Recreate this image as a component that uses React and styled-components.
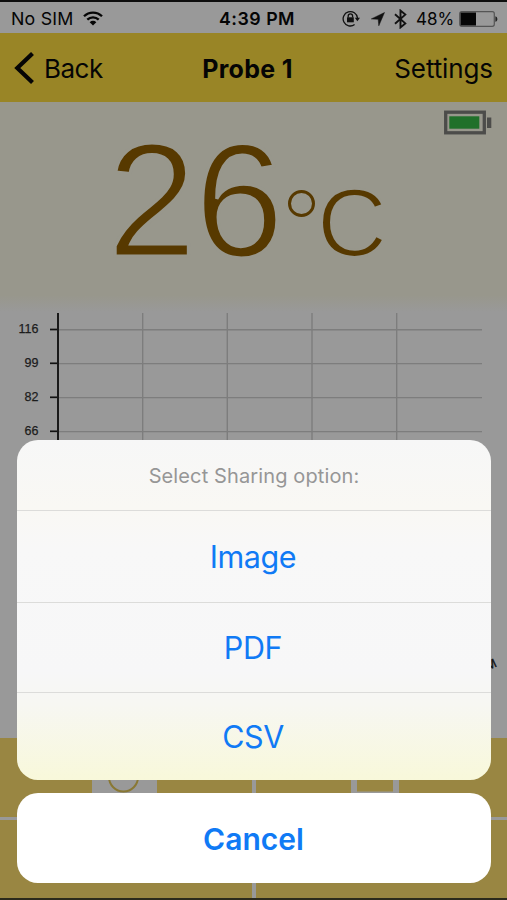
import React from "react";
import styled, { createGlobalStyle } from "styled-components";

const GlobalStyle = createGlobalStyle`
  * {
    box-sizing: border-box;
  }
  body {
    margin: 0;
    font-family: Inter, "Liberation Sans", sans-serif;
  }
  button {
    font-family: inherit;
    border: 0;
    margin: 0;
    padding: 0;
    background: none;
    cursor: pointer;
  }
`;

const Phone = styled.div`
  position: relative;
  display: flex;
  flex-direction: column;
  width: 507px;
  height: 900px;
  overflow: hidden;
  background: #999;
  border-top: 2px solid #0e0e0e;
  border-bottom: 2px solid #2c2a1c;
  color: #050505;
`;

const StatusBar = styled.div`
  display: grid;
  grid-template-columns: 1fr auto 1fr;
  align-items: center;
  height: 31px;
  padding: 2px 9px 0 11px;
  font-size: 17px;
`;

const StatusGroup = styled.div`
  display: flex;
  align-items: center;
  justify-content: ${(props) => (props.$end ? "flex-end" : "flex-start")};
  letter-spacing: ${(props) => (props.$end ? "-0.1px" : "0.2px")};

  svg {
    flex: none;
  }
`;

const Carrier = styled.span`
  margin-right: 9px;
  font-size: 17.8px;
`;

const Gap = styled.span`
  flex: none;
  width: ${(props) => props.$w}px;
`;

const Clock = styled.span`
  padding-left: 5px;
  font-size: 17.8px;
  font-weight: 600;
  letter-spacing: 0.5px;
`;

const NavBar = styled.div`
  display: grid;
  grid-template-columns: 1fr auto 1fr;
  align-items: center;
  height: 69px;
  padding: 1px 14px 0;
  background: #998526;
  font-size: 26px;
`;

const NavButton = styled.button`
  display: flex;
  align-items: center;
  justify-self: ${(props) => (props.$end ? "end" : "start")};
  gap: 9px;
  color: inherit;
  font-size: 26px;
  letter-spacing: ${(props) => (props.$end ? "-0.1px" : "-0.5px")};
`;

const NavTitle = styled.h1`
  margin: 0;
  padding: 1px 12px 0 0;
  font-size: 25px;
  font-weight: 700;
  letter-spacing: 0.3px;
`;

const Reading = styled.div`
  display: flex;
  flex-direction: column;
  height: 210px;
  padding-top: 8px;
  background: linear-gradient(#98978c 0 92%, #999);
`;

const ProbeBattery = styled.div`
  display: flex;
  justify-content: flex-end;
  height: 25px;
  padding-right: 15px;
`;

/* the stroke in the panel colour thins the digits to a light weight */
const Temperature = styled.div`
  display: flex;
  align-items: baseline;
  padding-left: 107px;
  height: 150px;
  color: #573900;
  font-family: "Liberation Sans", sans-serif;
  -webkit-text-stroke: 3.2px #98978c;
`;

const Degrees = styled.span`
  font-size: 161px;
  line-height: 131px;
  letter-spacing: -2px;
`;

const DegreeRing = styled.span`
  width: 27px;
  height: 27px;
  margin: 0 2px 0 6px;
  border: 3.5px solid #573900;
  border-radius: 50%;
  transform: translateY(-39px);
`;

const Unit = styled.span`
  font-size: 97px;
  line-height: 100px;
  -webkit-text-stroke-width: 2.2px;
`;

const ChartArea = styled.div`
  height: 426px;

  text {
    font-family: "Liberation Sans", sans-serif;
    font-size: 12.5px;
  }
`;

const Tiles = styled.div`
  flex: 1;
  display: grid;
  grid-template-columns: 252px 1fr;
  grid-template-rows: 79px 1fr;
  gap: 3px 4px;
`;

const Tile = styled.div`
  display: flex;
  justify-content: center;
  padding-right: ${(props) => props.$inset || 0}px;
  background: #998642;
`;

const Overlay = styled.div`
  position: absolute;
  left: 17px;
  right: 16px;
  bottom: 15px;
  display: flex;
  flex-direction: column;
  gap: 13px;
`;

const Sheet = styled.div`
  display: flex;
  flex-direction: column;
  height: 340px;
  overflow: hidden;
  border-radius: 21px;
  background: linear-gradient(#f7f7f7, #f9f8f4 20%, #f8f8f8 32%, #f7f7f8 68%, #f7f7f2 78%, #f8f8da);
`;

const SheetTitle = styled.div`
  height: 70px;
  line-height: 72px;
  text-align: center;
  font-size: 20px;
  letter-spacing: 0.12px;
  color: #969696;
`;

const SheetButton = styled.button`
  height: ${(props) => props.$height}px;
  padding-right: 2px;
  border-top: 1.5px solid #dcdcda;
  color: #107af5;
  font-size: 30.5px;
  letter-spacing: -0.4px;
`;

const CancelButton = styled.button`
  height: 90px;
  padding: 1px 1px 0 0;
  border-radius: 21px;
  background: #fff;
  color: #107af5;
  font-size: 30px;
  font-weight: 600;
`;

const WifiIcon = () => (
  <svg width="20" height="15" viewBox="0 0 20 15" fill="none" stroke="#050505" strokeWidth="2.3">
    <path d="M1 5.2C6 0.3 14 0.3 19 5.2" />
    <path d="M4.3 8.6C7.5 5.5 12.5 5.5 15.7 8.6" />
    <path d="M10 14.4L6.7 11.2C8.6 9.4 11.4 9.4 13.3 11.2Z" fill="#050505" stroke="none" />
  </svg>
);

const LockIcon = () => (
  <svg width="18" height="17" viewBox="0 0 18 17" fill="none" stroke="#111">
    <path d="M12.6 14.6A7.2 7.2 0 1 1 15.5 8" strokeWidth="1.3" />
    <path d="M12.8 7.8h5.2l-2.6 3.4z" fill="#111" stroke="none" />
    <path d="M6.2 7.6V6a2.2 2.2 0 0 1 4.4 0v1.6" strokeWidth="1.3" />
    <rect x="5" y="7.3" width="6.8" height="5" fill="#111" stroke="none" />
  </svg>
);

const LocationIcon = () => (
  <svg width="14" height="14" viewBox="0 0 14 14">
    <path d="M13.5 0.5L7.8 13.8L7.2 7.3L0.3 6.9Z" fill="#111" stroke="#111" strokeWidth="0.5" />
  </svg>
);

const BluetoothIcon = () => (
  <svg width="13" height="20" viewBox="0 0 13 20" fill="none" stroke="#111" strokeWidth="1.9">
    <path d="M1 5.3L11.3 14.4L6.5 18.4V1.6L11.3 5.6L1 14.7" />
  </svg>
);

const StatusBattery = () => (
  <svg width="39" height="16" viewBox="0 0 39 16">
    <rect x="0.7" y="0.7" width="34.6" height="14.6" rx="2" fill="none" stroke="#555" strokeWidth="1.2" />
    <rect x="1.5" y="1.5" width="15.5" height="13" fill="#050505" />
    <path d="M36.4 5.2C39 6 39 10 36.4 10.8Z" fill="#222" />
  </svg>
);

const BackIcon = () => (
  <svg width="21" height="34" viewBox="0 0 21 34" fill="none" stroke="#050505" strokeWidth="4.2">
    <path d="M18.5 2.5L3.3 17L18.5 31.5" />
  </svg>
);

const ProbeBatteryIcon = () => (
  <svg width="48" height="25" viewBox="0 0 48 25">
    <rect x="1.7" y="2.2" width="38.6" height="20.6" fill="none" stroke="#4c4c4a" strokeWidth="3.3" />
    <rect x="5.3" y="6.3" width="30" height="12.4" fill="#20702a" />
    <rect x="43" y="7.5" width="4.3" height="10.5" fill="#4c4c4a" />
  </svg>
);

const TimerIcon = () => (
  <svg width="65" height="59" viewBox="0 0 65 59">
    <rect width="65" height="59" fill="#999" />
    <circle cx="31.5" cy="39" r="14.5" fill="none" stroke="#897834" strokeWidth="2" />
  </svg>
);

const StandIcon = () => (
  <svg width="49" height="57" viewBox="0 0 49 57" fill="#999">
    <rect width="6" height="57" />
    <rect x="42" width="6" height="57" />
    <rect y="53.5" width="48" height="3" />
  </svg>
);

const yTicks = [
  { value: 116, y: 17.5 },
  { value: 99, y: 51.3 },
  { value: 82, y: 85.3 },
  { value: 66, y: 119.3 },
];
const xLines = [142.7, 227.3, 312, 396.7];

const Chart = () => (
  <ChartArea>
    <svg width="507" height="426" viewBox="0 0 507 426">
      {xLines.map((x) => (
        <line key={x} x1={x} x2={x} y1="1" y2="330" stroke="#7d7d7d" strokeWidth="1.4" />
      ))}
      {yTicks.map(({ value, y }) => (
        <g key={value}>
          <line x1="58" x2="482" y1={y + 0.3} y2={y + 0.3} stroke="#7d7d7d" strokeWidth="1.4" />
          <line x1="50" x2="58" y1={y} y2={y} stroke="#111" strokeWidth="1.7" />
          <text x="38.5" y={y + 3.8} textAnchor="end" fill="#1c1c1c" stroke="#1c1c1c" strokeWidth="0.25">
            {value}
          </text>
        </g>
      ))}
      <line x1="58" x2="58" y1="1" y2="330" stroke="#1a1a1a" strokeWidth="2" />
      <text transform="translate(488 358.5) rotate(-25)" fill="#111" stroke="#111" strokeWidth="0.4">
        M
      </text>
    </svg>
  </ChartArea>
);

const options = [
  { name: "Image", height: 92 },
  { name: "PDF", height: 90 },
  { name: "CSV", height: 88 },
];

const App = () => {
  return (
    <Phone>
      <GlobalStyle />
      <StatusBar>
        <StatusGroup>
          <Carrier>No SIM</Carrier>
          <WifiIcon />
        </StatusGroup>
        <Clock>4:39 PM</Clock>
        <StatusGroup $end>
          <LockIcon />
          <Gap $w={11} />
          <LocationIcon />
          <Gap $w={9} />
          <BluetoothIcon />
          <Gap $w={9} />
          <span>48%</span>
          <Gap $w={5} />
          <StatusBattery />
        </StatusGroup>
      </StatusBar>
      <NavBar>
        <NavButton>
          <BackIcon />
          Back
        </NavButton>
        <NavTitle>Probe 1</NavTitle>
        <NavButton $end>Settings</NavButton>
      </NavBar>
      <Reading>
        <ProbeBattery>
          <ProbeBatteryIcon />
        </ProbeBattery>
        <Temperature>
          <Degrees>26</Degrees>
          <DegreeRing />
          <Unit>C</Unit>
        </Temperature>
      </Reading>
      <Chart />
      <Tiles>
        <Tile $inset={3}>
          <TimerIcon />
        </Tile>
        <Tile $inset={12}>
          <StandIcon />
        </Tile>
        <Tile />
        <Tile />
      </Tiles>
      <Overlay>
        <Sheet>
          <SheetTitle>Select Sharing option:</SheetTitle>
          {options.map((option) => (
            <SheetButton key={option.name} $height={option.height}>
              {option.name}
            </SheetButton>
          ))}
        </Sheet>
        <CancelButton>Cancel</CancelButton>
      </Overlay>
    </Phone>
  );
};

export default App;
